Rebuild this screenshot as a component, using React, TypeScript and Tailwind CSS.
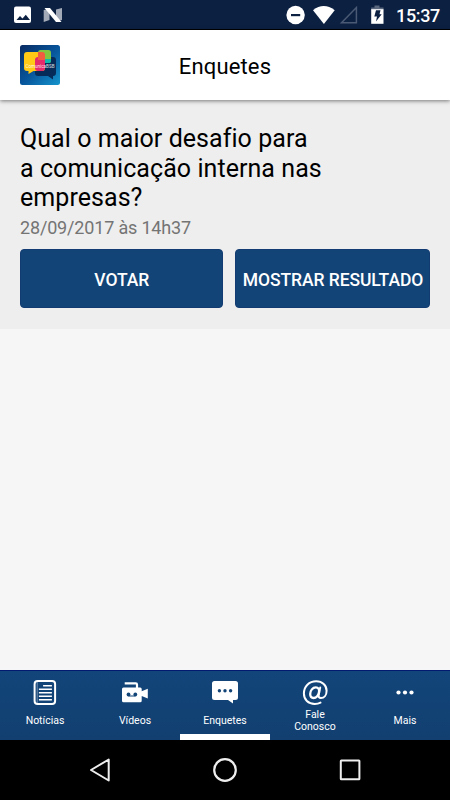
import React from "react";

function StatusBar() {
  return (
    <header className="flex h-[30px] shrink-0 items-start justify-between border-b border-black bg-[#0c2042] pl-[14px] pr-[10px]">
      <svg width="50" height="29" viewBox="14 0 50 29">
        <rect x="14" y="6.500" width="17" height="16.500" rx="2" fill="#fff" />
        <path d="M16.500 20l3.500-4 2.500 2.500 3.300-3.700 4.200 5.200z" fill="#0c2042" />
        <path d="M43.700 10l5.800-1v11l-5.800 2zM56 9.500l6-1.500v12l-6 1.500z" fill="#a4abb8" />
        <path d="M44.500 8h5.500L61.500 22H56z" fill="#fff" />
      </svg>
      <div className="flex">
        <svg width="100" height="29" viewBox="286 0 100 29">
          <circle cx="295.600" cy="15" r="9.200" fill="#fff" />
          <rect x="291" y="14" width="9.200" height="2.200" fill="#0c2042" />
          <path d="M313 10.200Q323.700 1.800 334.700 10.200L323.900 24z" fill="#fff" />
          <path d="M356.400 7.500V22.800H341.500z" fill="none" stroke="#4b5a74" strokeWidth="1.500" />
          <path d="M374.500 5.500h5v2h4v3h-12.300v-3h3.300z" fill="#5b687e" />
          <path d="M371.200 9.200h12.300v14.600h-12.300z" fill="#fff" />
          <path d="M376 10.300h4.500l-1 4h2.200L376 21.500l1-5h-2.700z" fill="#0c2042" />
        </svg>
        <span className="ml-[10px] w-[44px] whitespace-nowrap text-[18px] font-medium leading-[32px] tracking-[-0.35px] text-white">15:37</span>
      </div>
    </header>
  );
}

function Logo() {
  return (
    <svg width="40" height="40" viewBox="0 0 40 40" className="block">
      <defs>
        <linearGradient id="logo-bg" x1="0" y1="0" x2="1" y2="1">
          <stop stopColor="#092b62" />
          <stop offset=".5" stopColor="#07549a" />
          <stop offset="1" stopColor="#1595cd" />
        </linearGradient>
      </defs>
      <rect width="40" height="40" rx="2.500" fill="url(#logo-bg)" />
      <path d="M18 12h15q3 0 3 3v13q0 3-3 3v3.500L28 31H18q-3 0-3-3V15q0-3 3-3z" fill="#062b58" />
      <path d="M7 7h15q3 0 3 3v13q0 3-3 3h-8.500l-5 3v-3H7q-3 0-3-3V10q0-3 3-3z" fill="#ffc915" />
      <rect x="18" y="5" width="13" height="13" rx="2.500" fill="#82c63f" />
      <path d="M25 14h6v2q0 2-2 2h-4z" fill="#10b7ac" />
      <path d="M18 12h7v11q0 3-3 3h-4q-3 0-3-3v-8q0-3 3-3z" fill="#e62a6b" />
      <path d="M18 7h4q3 0 3 3v5h-7z" fill="#f15b40" />
      <text x="5.500" y="23" fontSize="4.900" fontFamily="Roboto, sans-serif" fill="#fff" opacity=".85" textLength="29" lengthAdjust="spacingAndGlyphs">ComunicaBSB</text>
    </svg>
  );
}

function NewsIcon() {
  return (
    <svg width="24" height="26" viewBox="0 0 24 26" fill="none" stroke="#fff">
      <rect x="1.600" y="1.100" width="20.500" height="22.900" rx="3" strokeWidth="2" />
      <path d="M4.200 2v21" strokeWidth=".8" opacity=".5" />
      <path d="M10.100 5.700h8.800M5.900 9.200h13M5.900 12.700h13M5.900 16.200h13M5.900 19.700h13" strokeWidth="1.400" />
    </svg>
  );
}

function VideoIcon() {
  return (
    <svg width="26" height="26" viewBox="0 0 26 26">
      <path d="M2.700 3.300h11q1.300 0 1.300 1.300V8" fill="none" stroke="#fff" strokeWidth="2.200" />
      <path d="M1.500 7.500h16.700q1.500 0 1.500 1.500v2.300l6.100-2.500v9.700l-6.100-2.600v4.800q0 1.500-1.500 1.500H1.500Q0 22.200 0 20.700V9q0-1.500 1.500-1.500z" fill="#fff" />
      <circle cx="6.500" cy="14.500" r="1.900" fill="#124477" />
      <circle cx="13.300" cy="14.500" r="1.900" fill="#124477" />
      <path d="M6.500 16h6.800" stroke="#124477" strokeWidth="1" />
    </svg>
  );
}

function PollIcon() {
  return (
    <svg width="26" height="26" viewBox="0 0 26 26">
      <path d="M2.500 1h21Q26 1 26 3.500v14q0 2.500-2.500 2.500H21v3.500L16 20H2.500Q0 20 0 17.500v-14Q0 1 2.500 1z" fill="#fff" />
      <circle cx="7.400" cy="10.700" r="1.700" fill="#124477" />
      <circle cx="13" cy="10.700" r="1.700" fill="#124477" />
      <circle cx="18.600" cy="10.700" r="1.700" fill="#124477" />
    </svg>
  );
}

function AtIcon() {
  return (
    <svg width="26" height="26" viewBox="0 0 26 26" fill="none" stroke="#fff" strokeLinecap="round" strokeLinejoin="round">
      <path d="M18.500 22.600C16.800 23.500 15 23.900 12.800 23.900C6.200 23.900 1.900 19.700 1.900 13.500C1.900 6.500 7.100 1.300 14.200 1.300C20.300 1.300 24.600 5.200 24.600 10.700C24.600 15.200 22 18 18.900 18C17 18 16.300 16.800 16.700 14.900L18.200 7.600" strokeWidth="2" />
      <path d="M17 12.300C16.300 15.900 13.900 18 11.500 18C9.500 18 8.200 16.500 8.200 14.100C8.200 10.400 10.700 7.400 13.800 7.400C16.200 7.400 17.600 9.200 17 12.300Z" strokeWidth="2.300" />
    </svg>
  );
}

function MoreIcon() {
  return (
    <svg width="18" height="26" viewBox="0 0 18 26" fill="#fff">
      <circle cx="2.500" cy="12.500" r="2.100" />
      <circle cx="9" cy="12.500" r="2.100" />
      <circle cx="15.500" cy="12.500" r="2.100" />
    </svg>
  );
}

const tabs = [
  { label: "Notícias", icon: <NewsIcon /> },
  { label: "Vídeos", icon: <VideoIcon /> },
  { label: "Enquetes", icon: <PollIcon />, active: true },
  { label: "Fale Conosco", icon: <AtIcon />, wrap: true },
  { label: "Mais", icon: <MoreIcon /> },
];

export default function App() {
  return (
    <div className="flex h-[800px] w-[450px] flex-col overflow-hidden bg-[#f6f6f6] font-[Roboto,sans-serif]">
      <StatusBar />
      <div className="z-10 grid h-[70px] shrink-0 grid-cols-[40px_1fr_40px] items-center bg-white px-5 shadow-[0_1px_4px_rgba(0,0,0,0.5)]">
        <Logo />
        <h1 className="pt-[3px] text-center text-[22px] leading-7 tracking-[0.15px] text-black">Enquetes</h1>
      </div>
      <main className="flex-1">
        <section className="h-[229px] bg-[#eeeeee] px-5 pt-6">
          <h2 className="whitespace-nowrap text-[25px] leading-[29.500px] tracking-[0.06px] text-black">
            Qual o maior desafio para<br />a comunicação interna nas<br />empresas?
          </h2>
          <p className="pt-[3px] text-[18px] leading-[24px] tracking-[-0.17px] text-[#747474]">28/09/2017 às 14h37</p>
          <div className="mt-[9px] flex justify-between">
            <button className="h-[59.500px] w-[202.500px] rounded border border-[#123b72] bg-[#124477] pl-px pt-[3px] text-[17.500px] font-medium tracking-[-0.08px] text-white">VOTAR</button>
            <button className="h-[59.500px] w-[195px] whitespace-nowrap rounded border border-[#123b72] bg-[#124477] pl-px pt-[3px] text-[17.500px] font-medium tracking-[-0.08px] text-white">MOSTRAR RESULTADO</button>
          </div>
        </section>
      </main>
      <nav className="grid h-[70px] shrink-0 grid-cols-5 border-t border-[#001b70] bg-linear-to-b from-[#12457a] to-[#123f70]">
        {tabs.map((tab) => (
          <button key={tab.label} className={`flex flex-col items-center pt-[9px] text-white ${tab.active ? "border-b-[6px] border-white" : ""}`}>
            {tab.icon}
            <span className={`text-[10.500px] ${tab.wrap ? "w-[44px] pt-[3px] leading-[12px]" : "pt-[8px] leading-[14px]"}`}>{tab.label}</span>
          </button>
        ))}
      </nav>
      <footer className="flex h-[60px] shrink-0 items-center justify-between bg-black px-[88px]">
        <svg width="24" height="26" viewBox="0 0 24 26"><path d="M20.700 2.500v21L3 13z" fill="none" stroke="#eee" strokeWidth="2" strokeLinejoin="round" /></svg>
        <svg width="26" height="26" viewBox="0 0 26 26"><circle cx="13" cy="13" r="10.800" fill="none" stroke="#eee" strokeWidth="2.200" /></svg>
        <svg width="24" height="26" viewBox="0 0 24 26"><rect x="2.800" y="3.600" width="18.600" height="18.600" rx=".5" fill="none" stroke="#eee" strokeWidth="2" /></svg>
      </footer>
    </div>
  );
}
